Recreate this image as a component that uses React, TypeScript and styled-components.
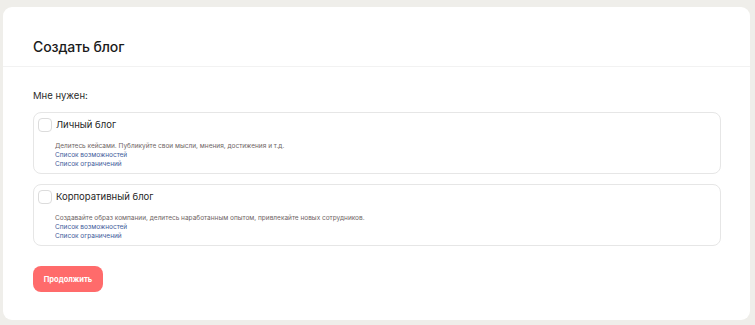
import React, { useState } from 'react';
import styled, { createGlobalStyle } from 'styled-components';

const GlobalStyle = createGlobalStyle`
  html, body {
    margin: 0;
    padding: 0;
    background: #efeeea;
    font-family: 'Inter', 'Noto Sans', sans-serif;
  }
`;

const Page = styled.div`
  padding: 7px 5px 5px 3px;
`;

const Card = styled.div`
  background: #ffffff;
  border-radius: 9px;
  height: 313px;
  box-sizing: border-box;
`;

const Header = styled.div`
  height: 60px;
  box-sizing: border-box;
  padding: 31px 30px 0;
  border-bottom: 1px solid #f2f2f2;
`;

const Title = styled.h1`
  margin: 0;
  font-size: 14px;
  line-height: 17px;
  font-weight: 500;
  color: #1b1b1b;
  letter-spacing: -0.1px;
`;

const Body = styled.div`
  padding: 23px 30px 0;
`;

const Lead = styled.div`
  font-size: 9.5px;
  line-height: 12px;
  color: #2c2c2c;
  margin-bottom: 10px;
`;

const OptionList = styled.div`
  display: flex;
  flex-direction: column;
  gap: 10px;
  width: 688px;
`;

const Option = styled.label<{ $active: boolean }>`
  display: block;
  border: 1px solid ${(p) => (p.$active ? '#ff6b6b' : '#e6e6e6')};
  border-radius: 8px;
  padding: 5px 5px 4px 4px;
  cursor: pointer;
`;

const OptionHead = styled.div`
  display: flex;
  align-items: center;
  gap: 4px;
`;

const Box = styled.span<{ $checked: boolean }>`
  width: 12px;
  height: 12px;
  border: 1px solid #dcdcdc;
  border-radius: 4px;
  background: ${(p) => (p.$checked ? '#ff6b6b' : '#fff')};
  flex-shrink: 0;
`;

const OptionTitle = styled.span`
  font-size: 9.5px;
  line-height: 14px;
  color: #1f1f1f;
`;

const Desc = styled.div`
  padding: 10px 0 0 17px;
  font-size: 6.5px;
  line-height: 9px;
`;

const DescText = styled.div`
  color: #6e6464;
`;

const DescLink = styled.a`
  display: block;
  color: #3e5a9a;
  text-decoration: none;
`;

const Button = styled.button`
  margin-top: 20px;
  width: 70px;
  height: 26px;
  border: none;
  border-radius: 8px;
  background: #ff6b6b;
  color: #fff;
  font-family: inherit;
  font-size: 7.5px;
  font-weight: 700;
  padding: 0;
  cursor: pointer;
`;

const options = [
  {
    id: 'personal',
    title: 'Личный блог',
    text: 'Делитесь кейсами. Публикуйте свои мысли, мнения, достижения и т.д.',
  },
  {
    id: 'corporate',
    title: 'Корпоративный блог',
    text: 'Создавайте образ компании, делитесь наработанным опытом, привлекайте новых сотрудников.',
  },
];

const App: React.FC = () => {
  const [selected, setSelected] = useState<string | null>(null);

  return (
    <>
      <GlobalStyle />
      <Page>
        <Card>
          <Header>
            <Title>Создать блог</Title>
          </Header>
          <Body>
            <Lead>Мне нужен:</Lead>
            <OptionList>
              {options.map((o) => (
                <Option key={o.id} $active={false} onClick={() => setSelected(o.id)}>
                  <OptionHead>
                    <Box $checked={selected === o.id} />
                    <OptionTitle>{o.title}</OptionTitle>
                  </OptionHead>
                  <Desc>
                    <DescText>{o.text}</DescText>
                    <DescLink href="#">Список возможностей</DescLink>
                    <DescLink href="#">Список ограничений</DescLink>
                  </Desc>
                </Option>
              ))}
            </OptionList>
            <Button>Продолжить</Button>
          </Body>
        </Card>
      </Page>
    </>
  );
};

export default App;
